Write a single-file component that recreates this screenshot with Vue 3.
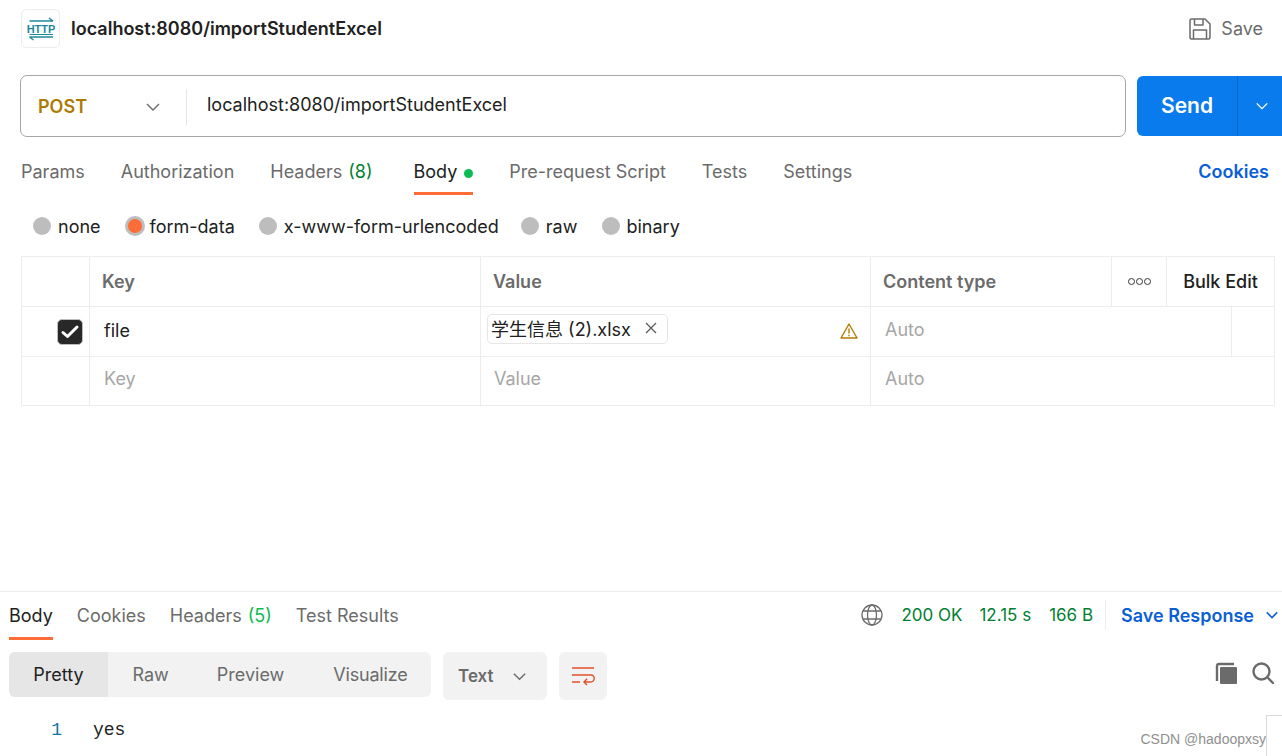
<script setup>
const reqTabs = [
  { label: 'Params' },
  { label: 'Authorization' },
  { label: 'Headers', count: '(8)' },
  { label: 'Body', active: true, dot: true },
  { label: 'Pre-request Script' },
  { label: 'Tests' },
  { label: 'Settings' }
]
const radios = [
  { label: 'none' },
  { label: 'form-data', on: true },
  { label: 'x-www-form-urlencoded' },
  { label: 'raw' },
  { label: 'binary' }
]
const resTabs = [
  { label: 'Body', active: true },
  { label: 'Cookies' },
  { label: 'Headers', count: '(5)' },
  { label: 'Test Results' }
]
const modes = ['Pretty', 'Raw', 'Preview', 'Visualize']
</script>

<template>
  <div class="page">
    <header class="top">
      <div class="logo">
        <svg width="28" height="28" viewBox="0 0 28 28" fill="none" stroke="#1f8a9c" stroke-width="1.500">
          <path d="M2.500 6H26M22 3L26 6" />
          <path d="M2.500 22H26M6.500 25L2.500 22" />
          <text x="14" y="17.500" text-anchor="middle" font-size="11" font-weight="700" font-family="Liberation Sans, sans-serif" fill="#1f8a9c" stroke="none">HTTP</text>
          <path d="M2.500 19.500H26" stroke-width="1" />
        </svg>
      </div>
      <div class="title">localhost:8080/importStudentExcel</div>
      <div class="save">
        <svg width="24" height="24" viewBox="0 0 24 24" fill="none" stroke="#6b6b6b" stroke-width="1.500" stroke-linejoin="round">
          <path d="M2 3.500A1.500 1.500 0 0 1 3.500 2H17L22 7V20.500A1.500 1.500 0 0 1 20.500 22H3.500A1.500 1.500 0 0 1 2 20.500Z" />
          <path d="M6.500 2V8H15V2M5.500 22V13H18.500V22" />
        </svg>
        <span>Save</span>
      </div>
    </header>

    <section class="urlrow">
      <div class="urlbox">
        <div class="method">
          <span>POST</span>
          <svg class="chev" width="16" height="16" viewBox="0 0 16 16" fill="none" stroke="#6b6b6b" stroke-width="1.400"><path d="M2 5L8 11L14 5" /></svg>
        </div>
        <div class="url">localhost:8080/importStudentExcel</div>
      </div>
      <div class="send">
        <span class="send-l">Send</span>
        <span class="send-r">
          <svg width="14" height="14" viewBox="0 0 16 16" fill="none" stroke="#fff" stroke-width="1.600"><path d="M2 5L8 11L14 5" /></svg>
        </span>
      </div>
    </section>

    <nav class="tabs">
      <div v-for="t in reqTabs" :key="t.label" class="tab" :class="{ active: t.active }">
        {{ t.label }}<span v-if="t.count" class="count">{{ t.count }}</span><i v-if="t.dot" class="dot"></i>
      </div>
      <div class="cookies">Cookies</div>
    </nav>

    <div class="radios">
      <label v-for="r in radios" :key="r.label" class="radio">
        <i class="circle" :class="{ on: r.on }"></i>{{ r.label }}
      </label>
    </div>

    <div class="table">
      <div class="row head">
        <div class="c c0"></div>
        <div class="c c1">Key</div>
        <div class="c c2">Value</div>
        <div class="c c3">Content type</div>
        <div class="c c4"><i></i><i></i><i></i></div>
        <div class="c c5">Bulk Edit</div>
      </div>
      <div class="row mid">
        <div class="c c0">
          <span class="check">
            <svg width="20" height="20" viewBox="0 0 20 20" fill="none" stroke="#fff" stroke-width="3" stroke-linecap="round" stroke-linejoin="round"><path d="M3 10.500L7.500 14.500L17 5" /></svg>
          </span>
        </div>
        <div class="c c1 body">file</div>
        <div class="c c2 filecell">
          <span class="chip">学生信息 (2).xlsx
            <svg width="12" height="12" viewBox="0 0 12 12" fill="none" stroke="#5c5c5c" stroke-width="1.300"><path d="M1 1L11 11M11 1L1 11" /></svg>
          </span>
          <svg class="warn" width="18" height="16" viewBox="0 0 18 16" fill="none" stroke="#b27c00" stroke-width="1.400" stroke-linejoin="round"><path d="M9 1L17 15H1Z" /><path d="M9 5.500V10.500M9 11.800V13.200" /></svg>
        </div>
        <div class="c c34 ph">Auto</div>
        <div class="c c6"></div>
      </div>
      <div class="row last">
        <div class="c c0"></div>
        <div class="c c1 ph body">Key</div>
        <div class="c c2 ph val">Value</div>
        <div class="c c3w ph">Auto</div>
      </div>
    </div>

    <section class="response">
      <div class="resbar">
        <div v-for="t in resTabs" :key="t.label" class="rtab" :class="{ active: t.active }">
          {{ t.label }}<span v-if="t.count" class="rcount">{{ t.count }}</span>
        </div>
        <div class="status">
          <svg width="22" height="22" viewBox="0 0 22 22" fill="none" stroke="#6b6b6b" stroke-width="1.300">
            <circle cx="11" cy="11" r="10" />
            <ellipse cx="11" cy="11" rx="4.500" ry="10" />
            <path d="M2 7H20M2 15H20" />
          </svg>
          <span class="s1">200&nbsp;OK</span>
          <span class="s2">12.15 s</span>
          <span class="s3">166 B</span>
          <span class="savres">Save Response</span>
          <svg width="14" height="14" viewBox="0 0 16 16" fill="none" stroke="#0b5fd6" stroke-width="1.700"><path d="M2 5L8 11L14 5" /></svg>
        </div>
      </div>

      <div class="tools">
        <div class="seg">
          <span v-for="(m, i) in modes" :key="m" class="mode" :class="{ sel: i === 0 }">{{ m }}</span>
        </div>
        <div class="fmt">
          <span>Text</span>
          <svg width="15" height="15" viewBox="0 0 16 16" fill="none" stroke="#6b6b6b" stroke-width="1.500"><path d="M2 5L8 11L14 5" /></svg>
        </div>
        <div class="wrap">
          <svg width="24" height="22" viewBox="0 0 24 22" fill="none" stroke="#e0512a" stroke-width="1.400">
            <path d="M1 3H23M1 17H9M1 10H20C24.500 10 24.500 17 19 17H13M16 13.800L13 17L16 20" />
          </svg>
        </div>
        <div class="right">
          <svg width="24" height="24" viewBox="0 0 24 24">
            <path d="M3 20V5C3 4 3.500 3 5 3H20" fill="none" stroke="#6b6b6b" stroke-width="2.400" />
            <rect x="6" y="6" width="17" height="17" rx="1" fill="#6b6b6b" />
          </svg>
          <svg width="24" height="24" viewBox="0 0 24 24" fill="none" stroke="#6b6b6b" stroke-width="2.400" stroke-linecap="round">
            <circle cx="10.500" cy="10.500" r="8" /><path d="M16.500 16.500L22 22" />
          </svg>
        </div>
      </div>

      <div class="code">
        <span class="ln">1</span><span class="txt">yes</span>
        <span class="mark">CSDN @hadoopxsy</span>
        <i class="corner"></i>
      </div>
    </section>
  </div>
</template>

<style>
html, body { margin: 0; background: #fff; overflow: hidden; }
</style>

<style scoped>
.page { width: 1282px; height: 756px; overflow: hidden; font-family: Inter, "Noto Sans CJK SC", sans-serif; font-size: 18px; color: #212121; background: #fff; display: flex; flex-direction: column; }
.top { height: 57px; display: flex; align-items: center; padding: 0 21px; box-sizing: border-box; }
.logo { width: 39px; height: 39px; box-sizing: border-box; border: 1px solid #ededed; border-radius: 5px; display: flex; align-items: center; justify-content: center; margin-right: 11px; }
.title { font-weight: 600; font-size: 18px; color: #212121; }
.save { margin-left: auto; display: flex; align-items: center; gap: 9px; color: #6b6b6b; margin-right: -2px; }
.urlrow { margin-top: 18px; padding-left: 20px; display: flex; align-items: center; }
.urlbox { width: 1106px; height: 62px; box-sizing: border-box; border: 1px solid #a6a6a6; border-radius: 7px; display: flex; align-items: center; }
.method { width: 166px; height: 36px; border-right: 1px solid #e6e6e6; display: flex; align-items: center; justify-content: space-between; box-sizing: border-box; padding: 0 25px 0 17px; color: #ad7a03; font-weight: 600; margin-top: 1px; }
.url { padding-left: 20px; margin-top: -3px; }
.send { margin-left: 11px; width: 145px; height: 60px; background: #097bed; border-radius: 6px 0 0 6px; display: flex; color: #fff; font-weight: 600; font-size: 21px; align-items: center; }
.send-l { width: 101px; height: 100%; box-sizing: border-box; padding-bottom: 1px; display: flex; align-items: center; justify-content: center; border-right: 1px solid #0a66c4; }
.send-r { flex: 1; display: flex; align-items: center; justify-content: center; padding-left: 4px; }
.tabs { margin-top: 16px; height: 42px; padding: 0 13px 0 21px; display: flex; gap: 36px; color: #6b6b6b; align-items: flex-start; }
.tab { height: 42px; box-sizing: border-box; padding-top: 7px; position: relative; display: flex; align-items: flex-start; line-height: 24px; }
.tab.active { color: #212121; border-bottom: 3px solid #ff6c37; margin-left: 5px; }
.count { color: #007f31; margin-left: 6px; }
.dot { width: 9px; height: 9px; border-radius: 50%; background: #0cbb52; margin: 9px 0 0 7px; }
.cookies { margin-left: auto; color: #0b5fd6; font-weight: 600; padding-top: 7px; line-height: 24px; }
.radios { margin-top: 20px; height: 22px; padding-left: 33px; display: flex; gap: 24px; align-items: center; }
.radio { display: flex; align-items: center; gap: 7px; }
.radio:nth-child(4) { margin-left: -2px; }
.radio:nth-child(5) { margin-left: 1px; gap: 6px; }
.circle { width: 18px; height: 18px; border-radius: 50%; background: #bdbdbd; box-sizing: border-box; flex-shrink: 0; }
.circle.on { width: 20px; height: 20px; background: #ff6c37; border: 3px solid #bdbdbd; margin-right: -2px; }
.table { margin: 19px 0 0 21px; width: 1254px; box-sizing: border-box; border: 1px solid #ededed; }
.row { display: flex; height: 50px; box-sizing: border-box; border-bottom: 1px solid #ededed; }
.row.last { height: 48px; border-bottom: 0; }
.c { display: flex; align-items: center; box-sizing: border-box; border-right: 1px solid #ededed; height: 100%; }
.mid .ph { padding-bottom: 4px; }
.mid .body { padding-bottom: 2px; }
.last .ph { padding-bottom: 5px; }
.c0 { width: 68px; justify-content: flex-end; padding-right: 6px; }
.c1 { width: 391px; padding-left: 12px; }
.c2 { width: 390px; padding-left: 12px; }
.c3 { width: 241px; padding-left: 12px; }
.c3w { flex: 1; border-right: 0; padding-left: 14px; }
.c34 { width: 361px; padding-left: 14px; }
.c4 { width: 55px; justify-content: center; gap: 1px; }
.c4 i { width: 7px; height: 7px; box-sizing: border-box; border: 1.500px solid #333; border-radius: 50%; }
.c5 { flex: 1; border-right: 0; justify-content: center; color: #212121; font-weight: 500; }
.c6 { flex: 1; border-right: 0; }
.head .c1, .head .c2, .head .c3 { color: #6b6b6b; font-weight: 600; }
.body { padding-left: 14px; }
.ph { color: #a6a6a6; }
.val { padding-left: 13px; }
.check { width: 26px; height: 26px; flex-shrink: 0; background: #282828; border-radius: 5px; display: flex; align-items: center; justify-content: center; box-sizing: border-box; border: 1px solid #bdbdbd; }
.filecell { padding-left: 6px; position: relative; justify-content: flex-start; }
.chip { height: 30px; width: 181px; box-sizing: border-box; border: 1px solid #e6e6e6; border-radius: 5px; padding: 0 10px 2px 3px; display: flex; align-items: center; justify-content: space-between; margin-top: -6px; white-space: nowrap; }
.warn { position: absolute; right: 12px; top: 16px; }
.response { margin-top: 185px; border-top: 1px solid #ededed; }
.resbar { height: 48px; display: flex; padding: 0 0 0 9px; gap: 24px; color: #6b6b6b; }
.rtab { height: 48px; box-sizing: border-box; padding-top: 12px; line-height: 24px; }
.rtab.active { color: #212121; border-bottom: 3px solid #ff6c37; }
.rcount { color: #0cbb52; margin-left: 6px; }
.status { margin-left: auto; display: flex; align-items: center; height: 46px; padding-right: 3px; }
.s1, .s2, .s3 { color: #007f31; font-size: 17px; }
.s1 { margin-left: 18px; }
.s2 { margin-left: 17px; }
.s3 { margin-left: 18px; padding-right: 12px; border-right: 1px solid #ededed; height: 30px; line-height: 30px; }
.savres { margin-left: 15px; margin-right: 11px; color: #0b5fd6; font-weight: 600; }
.tools { margin-top: 12px; padding-left: 9px; display: flex; align-items: flex-start; }
.seg { display: flex; flex-shrink: 0; width: 422px; height: 45px; background: #f2f2f2; border-radius: 6px; overflow: hidden; }
.mode { flex-shrink: 0; height: 100%; display: flex; align-items: center; padding: 0 24.500px; color: #6b6b6b; }
.mode:nth-child(3) { margin-left: -1px; }
.mode:nth-child(4) { letter-spacing: -0.200px; }
.mode.sel { background: #e6e6e6; color: #212121; width: 99px; box-sizing: border-box; justify-content: center; padding: 0; }
.fmt { margin-left: 12px; width: 104px; height: 48px; box-sizing: border-box; padding: 0 20px 0 15px; background: #f2f2f2; border-radius: 6px; display: flex; align-items: center; justify-content: space-between; color: #6b6b6b; font-weight: 600; font-size: 17px; }
.wrap { margin-left: 12px; width: 48px; height: 48px; background: #f2f2f2; border-radius: 6px; display: flex; align-items: center; justify-content: center; }
.right { margin-left: auto; display: flex; gap: 13px; padding: 9px 7px 0 0; }
.code { position: relative; margin-top: 17px; height: 38px; display: flex; font-family: "Liberation Mono", monospace; font-size: 18px; line-height: 26px; }
.ln { width: 62px; text-align: right; color: #0f76a8; }
.txt { margin-left: 31px; color: #212121; }
.mark { position: absolute; right: 16px; top: 9px; color: #8f8f8f; font-size: 14px; font-family: "Liberation Sans", sans-serif; }
.corner { position: absolute; right: 0; top: -2px; width: 16px; height: 60px; box-sizing: border-box; border-left: 1px solid #d9d9d9; border-top: 1px solid #d9d9d9; background: #fff; }
</style>
